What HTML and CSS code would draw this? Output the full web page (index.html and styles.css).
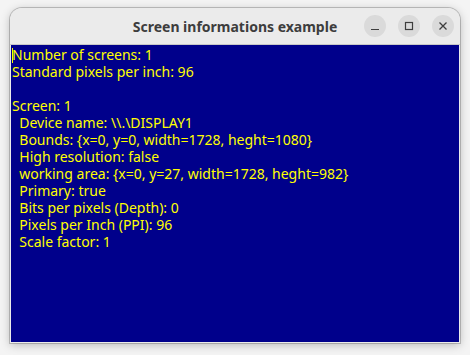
FILE: index.html
```html
<!DOCTYPE html>
<html>
<head>
<meta charset="utf-8">
<link rel="stylesheet" href="styles.css">
</head>
<body>
<div class="window">
  <div class="titlebar">
    <div class="title">Screen informations example</div>
    <div class="controls">
      <span class="btn"><svg width="10" height="10" viewBox="0 0 10 10"><path d="M1 8.5h8" stroke="#3d3d3d" stroke-width="1.2"/></svg></span>
      <span class="btn"><svg width="10" height="10" viewBox="0 0 10 10"><rect x="1.5" y="1.5" width="7" height="7" fill="none" stroke="#3d3d3d" stroke-width="1.2"/></svg></span>
      <span class="btn"><svg width="10" height="10" viewBox="0 0 10 10"><path d="M1.5 1.5l7 7M8.5 1.5l-7 7" stroke="#3d3d3d" stroke-width="1.3"/></svg></span>
    </div>
  </div>
  <div class="content"><span class="caret"></span><pre class="text">Number of screens: 1
Standard pixels per inch: 96

Screen: 1
  Device name: \\.\DISPLAY1
  Bounds: {x=0, y=0, width=1728, heght=1080}
  High resolution: false
  working area: {x=0, y=27, width=1728, heght=982}
  Primary: true
  Bits per pixels (Depth): 0
  Pixels per Inch (PPI): 96
  Scale factor: 1</pre></div>
</div>
</body>
</html>
```
FILE: styles.css
```css
html, body {
  margin: 0;
  padding: 0;
}
body {
  width: 470px;
  height: 355px;
  background: #f4f4f4;
  overflow: hidden;
}
.window {
  position: relative;
  margin: 8px 0 0 10px;
  width: 450px;
  height: 335px;
  box-sizing: border-box;
  border-radius: 12px 12px 0 0;
  background: #ebebeb;
  box-shadow: 0 2px 10px rgba(0,0,0,0.25), 0 0 0 1px #c4c4c4;
  display: flex;
  flex-direction: column;
  overflow: hidden;
}
.titlebar {
  height: 36px;
  flex: none;
  display: flex;
  align-items: center;
  justify-content: center;
  position: relative;
  border-bottom: 1px solid #c8c8c8;
  background: #ebebeb;
}
.title {
  font-family: "Noto Sans", sans-serif;
  font-weight: bold;
  font-size: 14px;
  color: #3d3d3d;
}
.controls {
  position: absolute;
  right: 6px;
  top: 7px;
  display: flex;
  gap: 12px;
}
.btn {
  width: 22px;
  height: 22px;
  border-radius: 50%;
  background: #dadada;
  display: flex;
  align-items: center;
  justify-content: center;
}
.content {
  flex: 1;
  background: #00008b;
  position: relative;
  margin: 0 1px 1px 1px;
  border: 1px solid #00008b;
}
.caret {
  position: absolute;
  left: 0;
  top: 2px;
  width: 1px;
  height: 15px;
  background: #ffff00;
}
.text {
  margin: 0;
  padding: 0;
  font-family: "Noto Sans", sans-serif;
  font-size: 14px;
  line-height: 17px;
  color: #ffff00;
  white-space: pre;
}
```
